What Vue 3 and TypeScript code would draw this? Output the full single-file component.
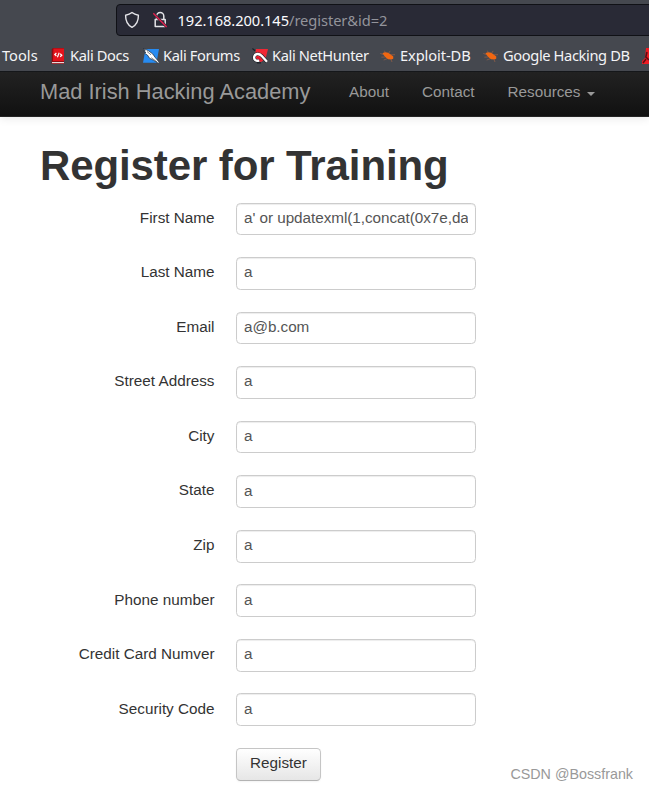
<script setup lang="ts">
import { ref } from 'vue'

interface Field {
  label: string
  value: string
}

const fields = ref<Field[]>([
  { label: 'First Name', value: "a' or updatexml(1,concat(0x7e,database()),0) or '" },
  { label: 'Last Name', value: 'a' },
  { label: 'Email', value: 'a@b.com' },
  { label: 'Street Address', value: 'a' },
  { label: 'City', value: 'a' },
  { label: 'State', value: 'a' },
  { label: 'Zip', value: 'a' },
  { label: 'Phone number', value: 'a' },
  { label: 'Credit Card Numver', value: 'a' },
  { label: 'Security Code', value: 'a' },
])
</script>

<template>
  <div class="window">
    <div class="toolbar">
      <div class="address">
        <svg class="shield" viewBox="0 0 16 18" width="16" height="18">
          <path d="M8 1.5C6.2 3 4 3.8 1.6 4.2C1.5 9.5 3.2 13.8 8 16.3C12.8 13.8 14.5 9.5 14.4 4.2C12 3.8 9.8 3 8 1.5Z" fill="none" stroke="#e4e4e8" stroke-width="1.4" stroke-linejoin="round" />
        </svg>
        <svg class="lock" viewBox="0 0 16 18" width="16" height="18">
          <path d="M4.6 8V5.2A3.6 3.6 0 0 1 11.8 5.2V8M3.2 8.4H13.2V15.5H3.2Z" fill="none" stroke="#e4e4e8" stroke-width="1.5" stroke-linejoin="round" />
          <path d="M1.3 2.2L14.7 16" stroke="#292a36" stroke-width="2.6" />
          <path d="M1.3 2.2L14.7 16" stroke="#e2214e" stroke-width="1.4" />
        </svg>
        <span class="url"><b>192.168.200.145</b>/register&amp;id=2</span>
      </div>
    </div>

    <div class="bookmarks">
      <span class="mark tools">Tools</span>
      <span class="mark docs">
        <svg viewBox="0 0 16 16" width="16" height="16">
          <path d="M3 0H14V16H1.7V1.2Z" fill="#8e0c12" />
          <path d="M3.4 .5H14V13H3Z" fill="#e3121b" />
          <path d="M2 14H14V15.2H2Z" fill="#e9dada" />
          <path d="M6.4 5L4.8 6.5L6.4 8M10.2 5.8L11.8 7.3L10.2 8.8M9.2 4.8L7.4 9.2" fill="none" stroke="#fff" stroke-width="1.2" />
        </svg>Kali Docs
      </span>
      <span class="mark forums">
        <svg viewBox="0 0 16 16" width="16" height="16">
          <path d="M2.5 1H16L13.5 14.7H0Z" fill="#278bf1" />
          <path d="M0 .2L5.2 2.6L9.8 6L12 9.2L16 14V15.7L10.8 12.4L6.6 10.3L4.4 7L1.4 5.2L3 4.5L.5 2.8L2.2 2.4Z" fill="#fff" stroke="#202a38" stroke-width=".7" />
          <path d="M4 3.5L8 6.8M8.2 9.7L14.2 14" stroke="#444f5a" stroke-width=".7" />
        </svg>Kali Forums
      </span>
      <span class="mark nethunter">
        <svg viewBox="0 0 16 16" width="16" height="16">
          <path d="M4 1H16L13.5 11L9 14L2 13Z" fill="#ef2734" />
          <path d="M.4 .5L3.1 2.8M5 14.8H9" stroke="#1b2028" stroke-width="1.2" />
          <path d="M15 13.8L9.8 8C7 5 3.2 5.5 2.3 8.4C1.5 11.8 4.3 13.6 7.2 12.4" fill="none" stroke="#1b2028" stroke-width="3.6" />
          <path d="M15 13.8L9.8 8C7 5 3.2 5.5 2.3 8.4C1.5 11.8 4.3 13.6 7.2 12.4" fill="none" stroke="#fff" stroke-width="2.4" />
          <path d="M5.3 9L9 12.4" stroke="#dc182c" stroke-width="1.4" />
        </svg>Kali NetHunter
      </span>
      <span v-for="name in ['Exploit-DB', 'Google Hacking DB']" :key="name" class="mark" :class="name === 'Exploit-DB' ? 'exploit' : 'google'">
        <svg viewBox="0 0 16 16" width="16" height="16">
          <path d="M2.4 5.4C4.5 3.4 8 4 10.4 6.2L13.3 8.6L13.2 10.8L11.4 11.6L8 11.2L5.5 9.2Z" fill="#f26711" />
          <path d="M5.5 5L4.4 2.7M8.7 5L10.2 2.9M10.5 6.8L15 6.7M3.8 6.8L.3 5.4M5 9L1.4 9.2M7 10.8L3.7 12M11 11.6L12 14" fill="none" stroke="#a86445" stroke-width=".6" />
        </svg>{{ name }}
      </span>
      <span class="mark last">
        <svg viewBox="0 0 16 16" width="16" height="16">
          <path d="M4 0H16V16H0V13L3 10Z" fill="#ed1c24" />
          <path d="M5 4L3.8 9L7 12M1 15L4 11" stroke="#5b0c12" stroke-width="1.5" fill="none" />
        </svg>
      </span>
    </div>

    <nav class="navbar">
      <a class="brand">Mad Irish Hacking Academy</a>
      <a class="nav about">About</a>
      <a class="nav contact">Contact</a>
      <a class="nav resources">Resources<i class="caret"></i></a>
    </nav>

    <main>
      <h1>Register for Training</h1>
      <form @submit.prevent>
        <div v-for="field in fields" :key="field.label" class="row">
          <label>{{ field.label }}</label>
          <input v-model="field.value" type="text" />
        </div>
        <button type="submit">Register</button>
      </form>
    </main>
    <span class="watermark">CSDN @Bossfrank</span>
  </div>
</template>

<style>
body {
  margin: 0;
  overflow: hidden;
}
</style>

<style scoped>
.window {
  position: relative;
  width: 649px;
  height: 790px;
  overflow: hidden;
  background: #fff;
  color: #333;
  font-family: "Liberation Sans", Arial, sans-serif;
  font-size: 15.27px;
  line-height: 21.82px;
}
.toolbar {
  box-sizing: border-box;
  height: 40px;
  padding: 4px 0 0 116px;
  background: #45484f;
}
.address {
  box-sizing: border-box;
  display: flex;
  align-items: center;
  width: 560px;
  height: 32px;
  padding-left: 7px;
  border: 1px solid #101116;
  border-radius: 4px;
  background: #292a36;
}
.lock {
  margin-left: 12px;
}
.url {
  margin-left: 9.5px;
  color: #93949b;
  font: 14.67px/22px "Noto Sans", sans-serif;
  letter-spacing: -.06px;
  white-space: nowrap;
}
.url b {
  color: #fbfbfe;
  font-weight: 400;
}
.bookmarks {
  position: relative;
  display: flex;
  align-items: center;
  height: 31px;
  background: #45484f;
  color: #f4f4f6;
  font: 14.67px/31px "Noto Sans", sans-serif;
  letter-spacing: -.38px;
}
.mark {
  display: flex;
  flex: none;
  align-items: center;
  gap: 4px;
  height: 31px;
  white-space: nowrap;
}
.tools { width: 48px; padding-left: 2px; letter-spacing: 0; }
.docs { width: 92px; }
.forums { width: 109px; margin-left: 1px; }
.nethunter { width: 128px; }
.exploit { width: 103px; letter-spacing: -.1px; }
.google { width: 159px; }
.navbar {
  box-sizing: border-box;
  display: flex;
  height: 46px;
  padding-left: 40px;
  border-top: 1px solid #15171a;
  border-bottom: 1px solid #252525;
  background: linear-gradient(#222, #111);
  box-shadow: 0 1px 9px rgba(0, 0, 0, .1);
  color: #999;
  line-height: 40px;
  white-space: nowrap;
}
.brand {
  width: 309px;
  font-size: 21.82px;
}
.about { width: 73px; }
.contact { width: 85.5px; }
.caret {
  display: inline-block;
  margin-left: 7px;
  border: 4px solid transparent;
  border-top-color: #999;
  border-bottom: 0;
  vertical-align: 1px;
}
main {
  padding: 27px 0 0 40px;
}
h1 {
  height: 44px;
  margin: 0 0 14.6px;
  font-size: 42px;
  line-height: 44px;
  letter-spacing: -.1px;
  white-space: nowrap;
}
.row {
  display: flex;
  height: 32.73px;
  margin-bottom: 21.82px;
}
label {
  width: 174.5px;
  padding-top: 4.2px;
  text-align: right;
}
input {
  box-sizing: border-box;
  width: 240px;
  height: 32.73px;
  margin: 0 0 0 21.5px;
  padding: 3.4px 7px 6.6px;
  border: 1px solid #ccc;
  border-radius: 4.4px;
  outline: 0;
  background: #fff;
  box-shadow: inset 0 1px 1px rgba(0, 0, 0, .075);
  color: #555;
  font: inherit;
  letter-spacing: -.04px;
}
button {
  display: block;
  width: 85px;
  height: 33px;
  margin-left: 196px;
  padding: 0 0 3px;
  border: 1px solid #c5c5c5;
  border-bottom-color: #b3b3b3;
  border-radius: 4.4px;
  background: linear-gradient(#fff, #e6e6e6);
  box-shadow: 0 1px 2px rgba(0, 0, 0, .05);
  color: #333;
  font: inherit;
}
.watermark {
  position: absolute;
  right: 16px;
  bottom: 4px;
  color: #999;
  font-size: 14.3px;
}
</style>
